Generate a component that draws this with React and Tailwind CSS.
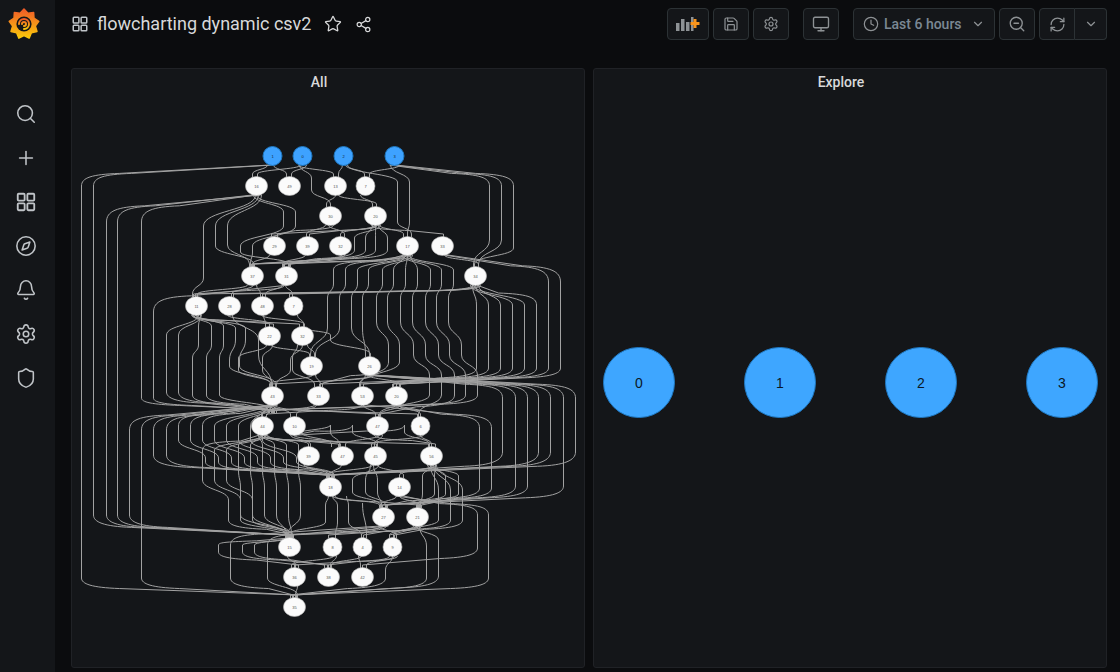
import { Search, Plus, Compass, Bell, Settings, Shield, Star, Share2, Save, Monitor, Clock, ChevronDown, ZoomOut, RefreshCw } from "lucide-react";

const font = { fontFamily: "Roboto, sans-serif" };

// rows of the graph: [y, [x, label, rx]...]
const ROWS = [
  [186, [[256, "16"], [289, "49"], [335, "13"], [365, "7", 9.5]]],
  [216, [[330, "30"], [375, "20"]]],
  [246, [[274, "29"], [307, "39"], [340, "32"], [407, "17"], [442, "33"]]],
  [276, [[252, "37"], [286, "31"], [475, "34"]]],
  [306, [[196, "11"], [229, "28"], [262, "48"], [293, "7", 9.5]]],
  [336, [[269, "22"], [302, "32"]]],
  [366, [[311, "19"], [369, "26"]]],
  [396, [[272, "43"], [318, "33"], [362, "53"], [396, "20"]]],
  [426, [[262, "44"], [294, "10"], [377, "47"], [420, "6", 9.5]]],
  [456, [[308, "39"], [342, "47"], [375, "45"], [431, "56"]]],
  [487, [[330, "18"], [399, "14"]]],
  [517, [[383, "27"], [417, "21"]]],
  [547, [[289, "15"], [332, "8", 9.5], [362, "4", 9.5], [392, "9", 9.5]]],
  [577, [[294, "36"], [328, "38"], [362, "42"]]],
  [607, [[294, "35"]]],
];
const ROOTS = [[272, "1"], [302, "0"], [343, "2"], [394, "3"]];

function link(ax, ay, bx, by, toLane) {
  const dx = bx - ax;
  const dy = by - ay;
  const sgn = Math.sign(dx);
  if (Math.abs(dx) > 55 && toLane) {
    const f = ay + dy * 0.4;
    return `L${bx - sgn * 38} ${f} C${bx - sgn * 10} ${f + 1} ${bx} ${ay + dy * 0.6} ${bx} ${by} `;
  }
  if (Math.abs(dx) > 55) {
    const f = ay + dy * 0.62;
    return `C${ax} ${ay + dy * 0.35} ${ax + sgn * 10} ${f - 1} ${ax + sgn * 38} ${f} L${bx} ${by} `;
  }
  const m = (ay + by) / 2;
  return `C${ax} ${m} ${bx} ${m} ${bx} ${by} `;
}

function route([sx, sy, tx, ty, lanes = []], i) {
  const ox = sx + (((i * 3) % 11) - 5);
  const tox = tx + (((i * 5) % 9) - 4);
  let d = `M${ox} ${sy} `;
  let cx = ox;
  let cy = sy;
  lanes.forEach(([x, y0, y1]) => {
    d += link(cx, cy, x, y0, true);
    d += `V${y1} `;
    cx = x;
    cy = y1;
  });
  d += link(cx, cy, tox, ty - 3, false) + `V${ty}`;
  return d;
}

const range = (n) => Array.from({ length: n }, (_, i) => i);

const EDGES = [
  // first rows
  [272, 165, 256, 177], [302, 165, 256, 177], [272, 165, 289, 177], [302, 165, 289, 177],
  [302, 165, 335, 177], [343, 165, 335, 177], [343, 165, 365, 177], [394, 165, 365, 177],
  [302, 165, 330, 207, [[311, 178, 190]]], [335, 195, 330, 207], [335, 195, 375, 207], [365, 195, 375, 207],
  // long lanes left
  [272, 165, 294, 598, [[81, 186, 578]]],
  [272, 165, 289, 538, [[93, 186, 515]]],
  [256, 195, 289, 538, [[106, 222, 515]]],
  [256, 195, 289, 538, [[117, 222, 515]]],
  [256, 195, 272, 413, [[141, 222, 398]]],
  [286, 285, 272, 413, [[153, 312, 398]]],
  [272, 405, 289, 538, [[129, 430, 515]]],
  [272, 405, 294, 598, [[141, 430, 578]]],
  [272, 405, 330, 478, [[153, 430, 455]]],
  [272, 405, 330, 478, [[166, 430, 455]]],
  // lanes right of the top
  [394, 165, 475, 267, [[489, 186, 240]]],
  [394, 165, 475, 267, [[501, 186, 240]]],
  [394, 165, 475, 267, [[513, 186, 248]]],
  [343, 165, 407, 237, [[397, 182, 222]]],
  [394, 165, 407, 237, [[409, 182, 222]]],
  // out of 16
  [256, 195, 196, 297, [[203, 226, 278]]],
  [256, 195, 252, 267, [[215, 226, 246]]],
  [256, 195, 252, 267, [[227, 226, 245]]],
  [256, 195, 286, 267, [[283, 212, 226], [240, 246, 252]]],
  [256, 195, 252, 267, [[295, 212, 226], [252, 246, 252]]],
  // 30, 20
  [330, 225, 274, 237], [330, 225, 307, 237], [330, 225, 340, 237],
  [375, 225, 340, 237], [375, 225, 407, 237], [375, 225, 442, 237], [375, 225, 274, 237], [375, 225, 307, 237],
  [375, 225, 286, 267, [[354, 238, 250]]],
  [375, 225, 286, 267, [[365, 238, 250]]],
  [375, 225, 252, 267, [[375, 238, 250]]],
  [375, 225, 286, 267, [[387, 238, 250]]],
  [274, 255, 252, 267], [307, 255, 286, 267], [340, 255, 252, 267], [340, 255, 286, 267],
  [407, 255, 252, 267], [407, 255, 286, 267], [442, 255, 475, 267],
  // bus towards row 306
  [475, 285, 196, 297], [475, 285, 229, 297], [475, 285, 262, 297], [475, 285, 293, 297],
  [252, 285, 196, 297], [286, 285, 196, 297], [252, 285, 229, 297], [252, 285, 262, 297], [286, 285, 262, 297], [286, 285, 293, 297],
  // lanes off 33 and 34
  [442, 255, 396, 387, [[548, 282, 368]]],
  [442, 255, 396, 387, [[560, 282, 368]]],
  ...[476, 488, 500, 512, 524, 536].map((x, i) => [475, 285, [396, 362, 396, 318, 362, 396][i], 387, [[x, 305, 368]]]),
  // fan out of 17
  ...[333, 345, 357, 368].map((x, i) => [407, 255, [311, 311, 369, 369][i], 357, [[x, 270, 284], [x - 6, 298, 328]]]),
  ...[382, 393].map((x, i) => [407, 255, [318, 362][i], 387, [[x, 270, 284], [x - 6, 298, 322], [x + 6, 345, 362]]]),
  ...[405, 417, 430, 441, 453].map((x, i) => [407, 255, [377, 420, 377, 272, 272][i], i < 3 ? 417 : 413, [[x, 270, 284], [x - 5, 298, 322], [x + 8, 345, 355], [x + 24, 375, 395]]]),
  // fan out of 11
  ...[198, 211, 223].map((x, i) => [196, 315, 272, 413, [[x, 326, 345], [x - 6 + i, 358, 395]]]),
  [196, 315, 272, 413, [[166, 335, 392]]],
  [196, 315, 272, 413, [[178, 335, 392]]],
  ...[235, 245].map((x) => [196, 315, 272, 387, [[x, 328, 340], [x - 6, 360, 366]]]),
  [229, 315, 272, 387, [[258, 340, 355]]],
  [196, 315, 269, 327], [229, 315, 269, 327], [262, 315, 269, 327], [293, 315, 302, 327], [196, 315, 302, 327], [262, 315, 302, 327],
  // 22, 32, 19, 26
  [269, 345, 311, 357], [302, 345, 311, 357], [269, 345, 272, 387, [[238, 358, 370]]], [302, 345, 272, 387, [[290, 360, 370]]],
  [269, 345, 272, 387, [[262, 358, 370]]], [302, 345, 318, 387, [[292, 358, 370]]],
  [302, 327, 369, 357, [[330, 335, 340]]],
  [311, 375, 272, 387], [311, 375, 318, 387], [369, 375, 362, 387], [369, 375, 396, 387], [369, 375, 272, 387], [369, 375, 318, 387],
  // bus at 412
  [272, 405, 262, 417], [272, 405, 294, 417], [272, 405, 377, 417], [272, 405, 420, 417],
  [318, 405, 294, 417], [362, 405, 377, 417], [396, 405, 377, 417], [318, 405, 262, 417], [362, 405, 262, 417], [396, 405, 420, 417],
  // lanes right, row 396 to 487
  ...[[502, 1], [538, 1], [550, 1], [575, 1]].map(([x]) => [369, 375, 330, 478, [[x, 398, 452]]]),
  ...[515, 527, 563].map((x) => [369, 375, 383, 508, [[x, 398, 486]]]),
  [362, 405, 417, 508, [[491, 428, 488]]],
  [396, 405, 417, 508, [[479, 428, 488]]],
  // fan out of 44
  ...range(8).map((i) => [272, 405, 330, 478, [[178 + i * 12, 426, 440], [205 + i * 13, 458, 462]]]),
  ...range(6).map((i) => [262, 435, 289, 538, [[238 + i * 12, 445, 470], [240 + i * 12, 488, 515]]]),
  ...range(3).map((i) => [262, 435, 289, 538, [[202 + i * 12, 450, 480], [228 + i * 12, 500, 520]]]),
  // bus at 441
  [262, 435, 308, 447], [262, 435, 342, 447], [262, 435, 375, 447], [262, 435, 431, 447],
  [294, 435, 308, 447], [294, 435, 342, 447], [377, 435, 342, 447], [377, 435, 375, 447], [377, 435, 431, 447], [420, 435, 431, 447], [420, 435, 375, 447],
  ...[300, 330, 352, 404].map((x, i) => [294, 435, [330, 342, 375, 431][i], 447, [[x, 425, 432]]]),
  // bus at 471
  [308, 465, 330, 478], [342, 465, 330, 478], [375, 465, 399, 478], [431, 465, 399, 478], [375, 465, 330, 478], [431, 465, 330, 478],
  ...[352, 365, 377].map((x) => [375, 465, 383, 508, [[x, 480, 492]]]),
  ...[422, 434, 445, 458].map((x) => [431, 465, [383, 383, 417, 417][x % 4], 508, [[x, 476, 494]]]),
  // 18, 14
  [330, 496, 383, 508], [330, 496, 417, 508], [399, 496, 383, 508], [399, 496, 417, 508],
  [325, 496, 289, 538, [[325, 505, 522]]], [337, 496, 332, 538, [[337, 505, 522]]], [348, 496, 362, 538, [[348, 505, 522]]],
  [361, 503, 362, 538],
  [399, 496, 362, 568, [[477, 515, 548]]],
  [399, 496, 294, 598, [[488, 515, 578]]],
  ...[438, 450, 462].map((x) => [431, 465, 392, 538, [[x, 490, 520]]]),
  // bus at 533
  [383, 526, 289, 538], [383, 526, 332, 538], [383, 526, 362, 538], [383, 526, 392, 538],
  [417, 526, 289, 538], [417, 526, 332, 538], [417, 526, 362, 538], [417, 526, 392, 538],
  [417, 526, 294, 598, [[438, 540, 576]]],
  [417, 526, 294, 598, [[426, 546, 578]]],
  [383, 526, 294, 598, [[267, 545, 578]]],
  [383, 526, 294, 598, [[230, 545, 578]]],
  [289, 538, 294, 568, [[218, 545, 552]]],
  [289, 538, 328, 568, [[242, 545, 552]]],
  [289, 538, 328, 568, [[254, 545, 552]]],
  // bottom rows
  [289, 556, 294, 568], [332, 556, 294, 568], [332, 556, 328, 568], [362, 556, 362, 568], [362, 556, 328, 568],
  [392, 556, 328, 568], [392, 556, 362, 568], [392, 556, 294, 568],
  [392, 556, 294, 598, [[385, 570, 578]]],
  [294, 586, 294, 598],
];

function Graph() {
  return (
    <svg viewBox="71.5 98 512 569" className="w-[512px] h-[569px] block">
      {EDGES.map((e, i) => (
        <path key={i} d={route(e, i)} fill="none" stroke="#a2a2a2" strokeWidth="1" />
      ))}
      {ROOTS.map(([x, label]) => (
        <g key={label}>
          <circle cx={x} cy={156} r={9.5} fill="#3ea2ff" stroke="#1f78c1" />
          <text x={x} y={157.5} fontSize="4" textAnchor="middle" fill="#123" style={{ fontFamily: "Liberation Sans, sans-serif" }}>{label}</text>
        </g>
      ))}
      {ROWS.map(([y, nodes]) =>
        nodes.map(([x, label, rx]) => (
          <g key={`${x}-${y}`}>
            <ellipse cx={x} cy={y} rx={rx || 11} ry={9.5} fill="#fbfbfb" stroke="#b8b8b8" strokeWidth="0.6" />
            <text x={x} y={y + 1.5} fontSize="4" textAnchor="middle" fill="#555" style={{ fontFamily: "Liberation Sans, sans-serif" }}>{label}</text>
          </g>
        ))
      )}
    </svg>
  );
}

function Logo() {
  const pts = range(18)
    .map((i) => {
      const a = (i / 18) * Math.PI * 2 - Math.PI / 2;
      const r = i % 2 ? 11.5 : 15;
      return `${24 + r * Math.cos(a)},${24 + r * Math.sin(a)}`;
    })
    .join(" ");
  return (
    <svg width="34" height="34" viewBox="7 7 34 34">
      <defs>
        <linearGradient id="lg" x1="0" y1="0" x2="0" y2="1">
          <stop offset="0" stopColor="#f05a28" />
          <stop offset="1" stopColor="#fbca0a" />
        </linearGradient>
      </defs>
      <polygon points={pts} fill="url(#lg)" stroke="url(#lg)" strokeWidth="1.5" strokeLinejoin="round" />
      <circle cx="24" cy="24" r="7.6" fill="#141619" />
      <path d="M19 24a5 5 0 1 1 5 5M22 24a2 2 0 1 1 2 2" fill="none" stroke="url(#lg)" strokeWidth="2" strokeLinecap="round" />
    </svg>
  );
}

function Apps({ size = 22, className }) {
  return (
    <svg width={size} height={size} viewBox="0 0 24 24" fill="none" stroke="currentColor" strokeWidth="2" className={className}>
      <rect x="3" y="3" width="7.5" height="7.5" rx="1" />
      <rect x="13.5" y="3" width="7.5" height="7.5" rx="1" />
      <rect x="3" y="13.5" width="7.5" height="7.5" rx="1" />
      <rect x="13.5" y="13.5" width="7.5" height="7.5" rx="1" />
    </svg>
  );
}

function AddPanel() {
  return (
    <svg width="24" height="16" viewBox="0 0 24 16">
      <rect x="0" y="7" width="3.5" height="8" fill="#8e9295" />
      <rect x="5" y="3" width="3.5" height="12" fill="#8e9295" />
      <rect x="10" y="6" width="3.5" height="9" fill="#8e9295" />
      <rect x="15" y="1" width="2.5" height="14" fill="#8e9295" />
      <path d="M19 3v9M14.5 7.5h9" stroke="#f7941d" strokeWidth="3" />
    </svg>
  );
}

function Btn({ className = "", children }) {
  return (
    <div className={`h-8 flex items-center justify-center bg-[#141619] border border-[#2c3235] rounded-sm text-[#8e9295] ${className}`}>
      {children}
    </div>
  );
}

function Panel({ title, children }) {
  return (
    <div className="flex-1 h-[600px] bg-[#141619] border border-[#202226] rounded-[3px] flex flex-col">
      <div className="h-[27px] mb-[2px] pr-[18px] shrink-0 flex items-center justify-center text-[14px] font-medium text-[#d8d9da]" style={font}>{title}</div>
      {children}
    </div>
  );
}

export default function App() {
  const side = [Search, Plus, Apps, Compass, Bell, Settings, Shield];
  return (
    <div className="flex w-[1120px] h-[672px] overflow-hidden bg-[#0b0c0e]" style={font}>
      <div className="w-[55px] shrink-0 bg-[#141619] flex flex-col items-center pr-[3px]">
        <div className="mt-[7px] mb-[62px] -ml-[4px]"><Logo /></div>
        <div className="flex flex-col gap-[22px] text-[#c0c4c8]">
          {side.map((Icon, i) => (
            <Icon key={i} size={22} strokeWidth={1.7} />
          ))}
        </div>
      </div>

      <div className="flex-1 pl-4 pr-[13px]">
        <div className="h-[68px] flex items-start pt-2">
          <div className="flex items-center h-8 text-[#d8d9da]">
            <Apps size={18} className="mr-[8px] text-[#c0c4c8]" />
            <span className="text-[18px] leading-none">flowcharting dynamic csv2</span>
            <Star size={18} strokeWidth={1.7} className="ml-[13px] text-[#d8d9da]" />
            <Share2 size={17} strokeWidth={1.7} className="ml-[13px] text-[#d8d9da]" />
          </div>
          <div className="ml-auto flex items-center">
            <Btn className="w-[42px]"><AddPanel /></Btn>
            <Btn className="w-9 ml-1"><Save size={16} strokeWidth={1.8} /></Btn>
            <Btn className="w-9 ml-1"><Settings size={16} strokeWidth={1.8} /></Btn>
            <Btn className="w-9 ml-[14px]"><Monitor size={18} strokeWidth={1.8} /></Btn>
            <Btn className="w-[142px] ml-[14px] justify-start pl-[9px] pr-[9px]">
              <Clock size={16} strokeWidth={1.8} />
              <span className="ml-[5px] text-[14px] font-medium text-[#7b8894]">Last 6 hours</span>
              <ChevronDown size={14} className="ml-auto" />
            </Btn>
            <Btn className="w-9 ml-1"><ZoomOut size={18} strokeWidth={1.8} /></Btn>
            <Btn className="w-[36px] ml-1 rounded-r-none"><RefreshCw size={17} strokeWidth={1.8} /></Btn>
            <Btn className="w-[32px] border-l-0 rounded-l-none"><ChevronDown size={14} /></Btn>
          </div>
        </div>
        <div className="flex gap-2">
          <Panel title="All"><Graph /></Panel>
          <Panel title="Explore">
            <div className="flex-1 flex items-center justify-between pl-[9px] pr-[8px]">
              {["0", "1", "2", "3"].map((n) => (
                <div key={n} className="w-[72px] h-[71px] rounded-full bg-[#3ea6ff] border border-[#1f78c1] flex items-center justify-center text-[14px] pt-px text-[#0b1826]" style={{ fontFamily: "Liberation Sans, sans-serif" }}>{n}</div>
              ))}
            </div>
          </Panel>
        </div>
      </div>
    </div>
  );
}
